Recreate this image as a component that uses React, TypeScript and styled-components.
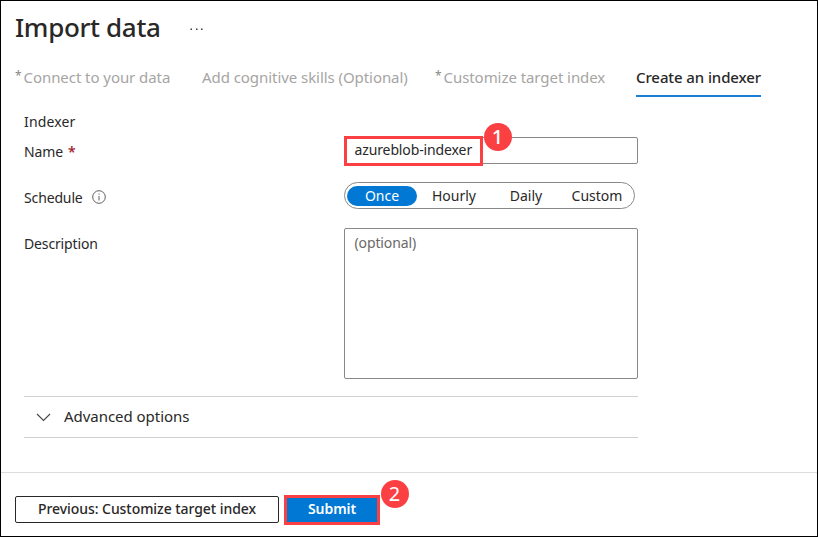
import React from 'react';
import styled, { createGlobalStyle } from 'styled-components';

const GlobalStyle = createGlobalStyle`
  * { box-sizing: border-box; }
  body {
    margin: 0;
    background: #fff;
    color: #292827;
    font-family: "Noto Sans", "Open Sans", sans-serif;
    font-size: 14px;
  }
`;

const Blade = styled.main`
  width: 818px;
  height: 537px;
  border: 1px solid #000;
  background: #fff;
  display: flex;
  flex-direction: column;
  overflow: hidden;
`;

const Header = styled.header`
  display: flex;
  align-items: center;
  height: 34px;
  margin-top: 9px;
  padding-left: 14px;
`;

const Title = styled.h1`
  margin: 0;
  width: 175px;
  font-size: 26px;
  font-weight: 500;
  line-height: 34px;
  letter-spacing: -0.35px;
`;

const MoreIcon = styled.svg`
  margin-top: 3px;
`;

const TabList = styled.nav`
  display: flex;
  height: 34px;
  margin-top: 19px;
  padding-left: 14px;
`;

const Tab = styled.div<{ $width: number; $active?: boolean }>`
  display: flex;
  width: ${(p) => p.$width}px;
  height: 34px;
  font-size: 15px;
  line-height: 28px;
  white-space: nowrap;
  letter-spacing: ${(p) => (p.$active ? '-0.1px' : '-0.06px')};
  font-weight: ${(p) => (p.$active ? 500 : 400)};
  color: ${(p) => (p.$active ? '#292827' : '#a6a5a4')};
  border-bottom: ${(p) => (p.$active ? '2px solid #1a7fd6' : 'none')};
`;

const TabMark = styled.span`
  width: 8.5px;
  font-size: 12px;
  line-height: 26px;
  color: #8a8886;
`;

const Form = styled.section`
  width: 614px;
  margin-left: 23px;
  margin-top: 12px;
  display: flex;
  flex-direction: column;
`;

const SectionLabel = styled.div`
  height: 28px;
  line-height: 26px;
  letter-spacing: 0.15px;
`;

const Field = styled.div<{ $height: number }>`
  display: flex;
  height: ${(p) => p.$height}px;
`;

const Label = styled.label<{ $offset?: number }>`
  display: flex;
  align-items: center;
  width: 320px;
  height: 30px;
  margin-top: ${(p) => p.$offset ?? 0}px;
  letter-spacing: -0.14px;
`;

const Required = styled.span`
  margin-left: 5px;
  color: #a4262c;
  font-weight: 600;
`;

const InfoIcon = styled.svg`
  margin-left: 9px;
`;

const TextBox = styled.div`
  position: relative;
  width: 294px;
  height: 27px;
  border: 1px solid #8a8886;
  border-radius: 2px;
  padding-left: 9.5px;
  line-height: 24px;
  letter-spacing: -0.12px;
`;

const NameHighlight = styled.div`
  position: absolute;
  left: -1px;
  top: -2px;
  width: 139px;
  height: 30px;
  border: 3px solid #fb4044;
`;

const StepBadge = styled.span`
  position: absolute;
  width: 28px;
  height: 28px;
  border-radius: 50%;
  background: #fb4044;
  color: #fff;
  font: 20px/28px "Noto Sans", sans-serif;
  letter-spacing: 0;
  text-align: center;
`;

const NameBadge = styled(StepBadge)`
  left: 138.5px;
  top: -15.5px;
  font-weight: 500;
`;

const SubmitBadge = styled(StepBadge)`
  left: 96.5px;
  top: -15px;
`;

const Segments = styled.div`
  display: flex;
  align-items: center;
  width: 291px;
  height: 27px;
  padding-left: 2px;
  border: 1px solid #8a8886;
  border-radius: 14px;
`;

const Segment = styled.div<{ $width?: number; $selected?: boolean }>`
  width: ${(p) => p.$width ?? 72}px;
  height: 20px;
  border-radius: 10px;
  line-height: 20px;
  text-align: center;
  background: ${(p) => (p.$selected ? '#0078d4' : 'transparent')};
  color: ${(p) => (p.$selected ? '#fff' : '#292827')};
`;

const TextArea = styled.div`
  width: 294px;
  height: 151px;
  border: 1px solid #8a8886;
  border-radius: 2px;
  padding: 2px 9.5px;
  line-height: 24px;
  letter-spacing: -0.12px;
  color: #6b6967;
`;

const Accordion = styled.div`
  display: flex;
  align-items: center;
  height: 42px;
  margin-top: 17px;
  padding: 0 0 2px 12px;
  gap: 13px;
  border-top: 1px solid #d2d0ce;
  border-bottom: 1px solid #d2d0ce;
  font-size: 15px;
  letter-spacing: -0.04px;
`;

const Chevron = styled.svg`
  margin-top: 2px;
`;

const Footer = styled.footer`
  display: flex;
  flex: 1;
  align-items: flex-start;
  margin-top: 34px;
  padding: 22px 0 0 14px;
  border-top: 1px solid #dddcdb;
`;

const Button = styled.button`
  width: 264px;
  height: 27px;
  margin: 1px 5px 0 0;
  padding: 0 0 2px;
  border: 1px solid #292827;
  border-radius: 2px;
  background: #fff;
  color: #292827;
  font: 500 14px/23px "Noto Sans", sans-serif;
  letter-spacing: -0.06px;
`;

const SubmitArea = styled.div`
  position: relative;
  width: 96px;
  height: 30px;
`;

const PrimaryButton = styled(Button)`
  width: 96px;
  height: 30px;
  margin: 0;
  padding: 0 0 3px;
  border: 3px solid #fb4044;
  border-radius: 0;
  background: #0078d4;
  color: #fff;
  font-weight: 600;
  line-height: 21px;
`;

export default function App() {
  return (
    <>
      <GlobalStyle />
      <Blade>
        <Header>
          <Title>Import data</Title>
          <MoreIcon width="13" height="4" viewBox="0 0 13 4" fill="#3b3a39">
            <rect x="0.5" y="1.5" width="1.5" height="1.5" />
            <rect x="6" y="1.5" width="1.5" height="1.5" />
            <rect x="11" y="1.5" width="1.5" height="1.5" />
          </MoreIcon>
        </Header>
        <TabList>
          <Tab $width={187}><TabMark>*</TabMark>Connect to your data</Tab>
          <Tab $width={233}>Add cognitive skills (Optional)</Tab>
          <Tab $width={201}><TabMark>*</TabMark>Customize target index</Tab>
          <Tab $width={125} $active>Create an indexer</Tab>
        </TabList>
        <Form>
          <SectionLabel>Indexer</SectionLabel>
          <Field $height={45}>
            <Label $offset={-1}>Name<Required>*</Required></Label>
            <TextBox>
              azureblob-indexer
              <NameHighlight />
              <NameBadge>1</NameBadge>
            </TextBox>
          </Field>
          <Field $height={46}>
            <Label>
              Schedule
              <InfoIcon width="14" height="14" viewBox="0 0 14 14" fill="none" stroke="#605e5c">
                <circle cx="7" cy="7" r="6.3" />
                <path d="M7 6v4.5M7 3.5v1.2" />
              </InfoIcon>
            </Label>
            <Segments>
              <Segment $width={70} $selected>Once</Segment>
              <Segment $width={74}>Hourly</Segment>
              <Segment $width={70}>Daily</Segment>
              <Segment>Custom</Segment>
            </Segments>
          </Field>
          <Field $height={151}>
            <Label>Description</Label>
            <TextArea>(optional)</TextArea>
          </Field>
          <Accordion>
            <Chevron width="15" height="9" viewBox="0 0 15 9" fill="none" stroke="#484644" strokeWidth="1.1">
              <path d="M1 1l6.5 6.5L14 1" />
            </Chevron>
            Advanced options
          </Accordion>
        </Form>
        <Footer>
          <Button>Previous: Customize target index</Button>
          <SubmitArea>
            <PrimaryButton>Submit</PrimaryButton>
            <SubmitBadge>2</SubmitBadge>
          </SubmitArea>
        </Footer>
      </Blade>
    </>
  );
}
